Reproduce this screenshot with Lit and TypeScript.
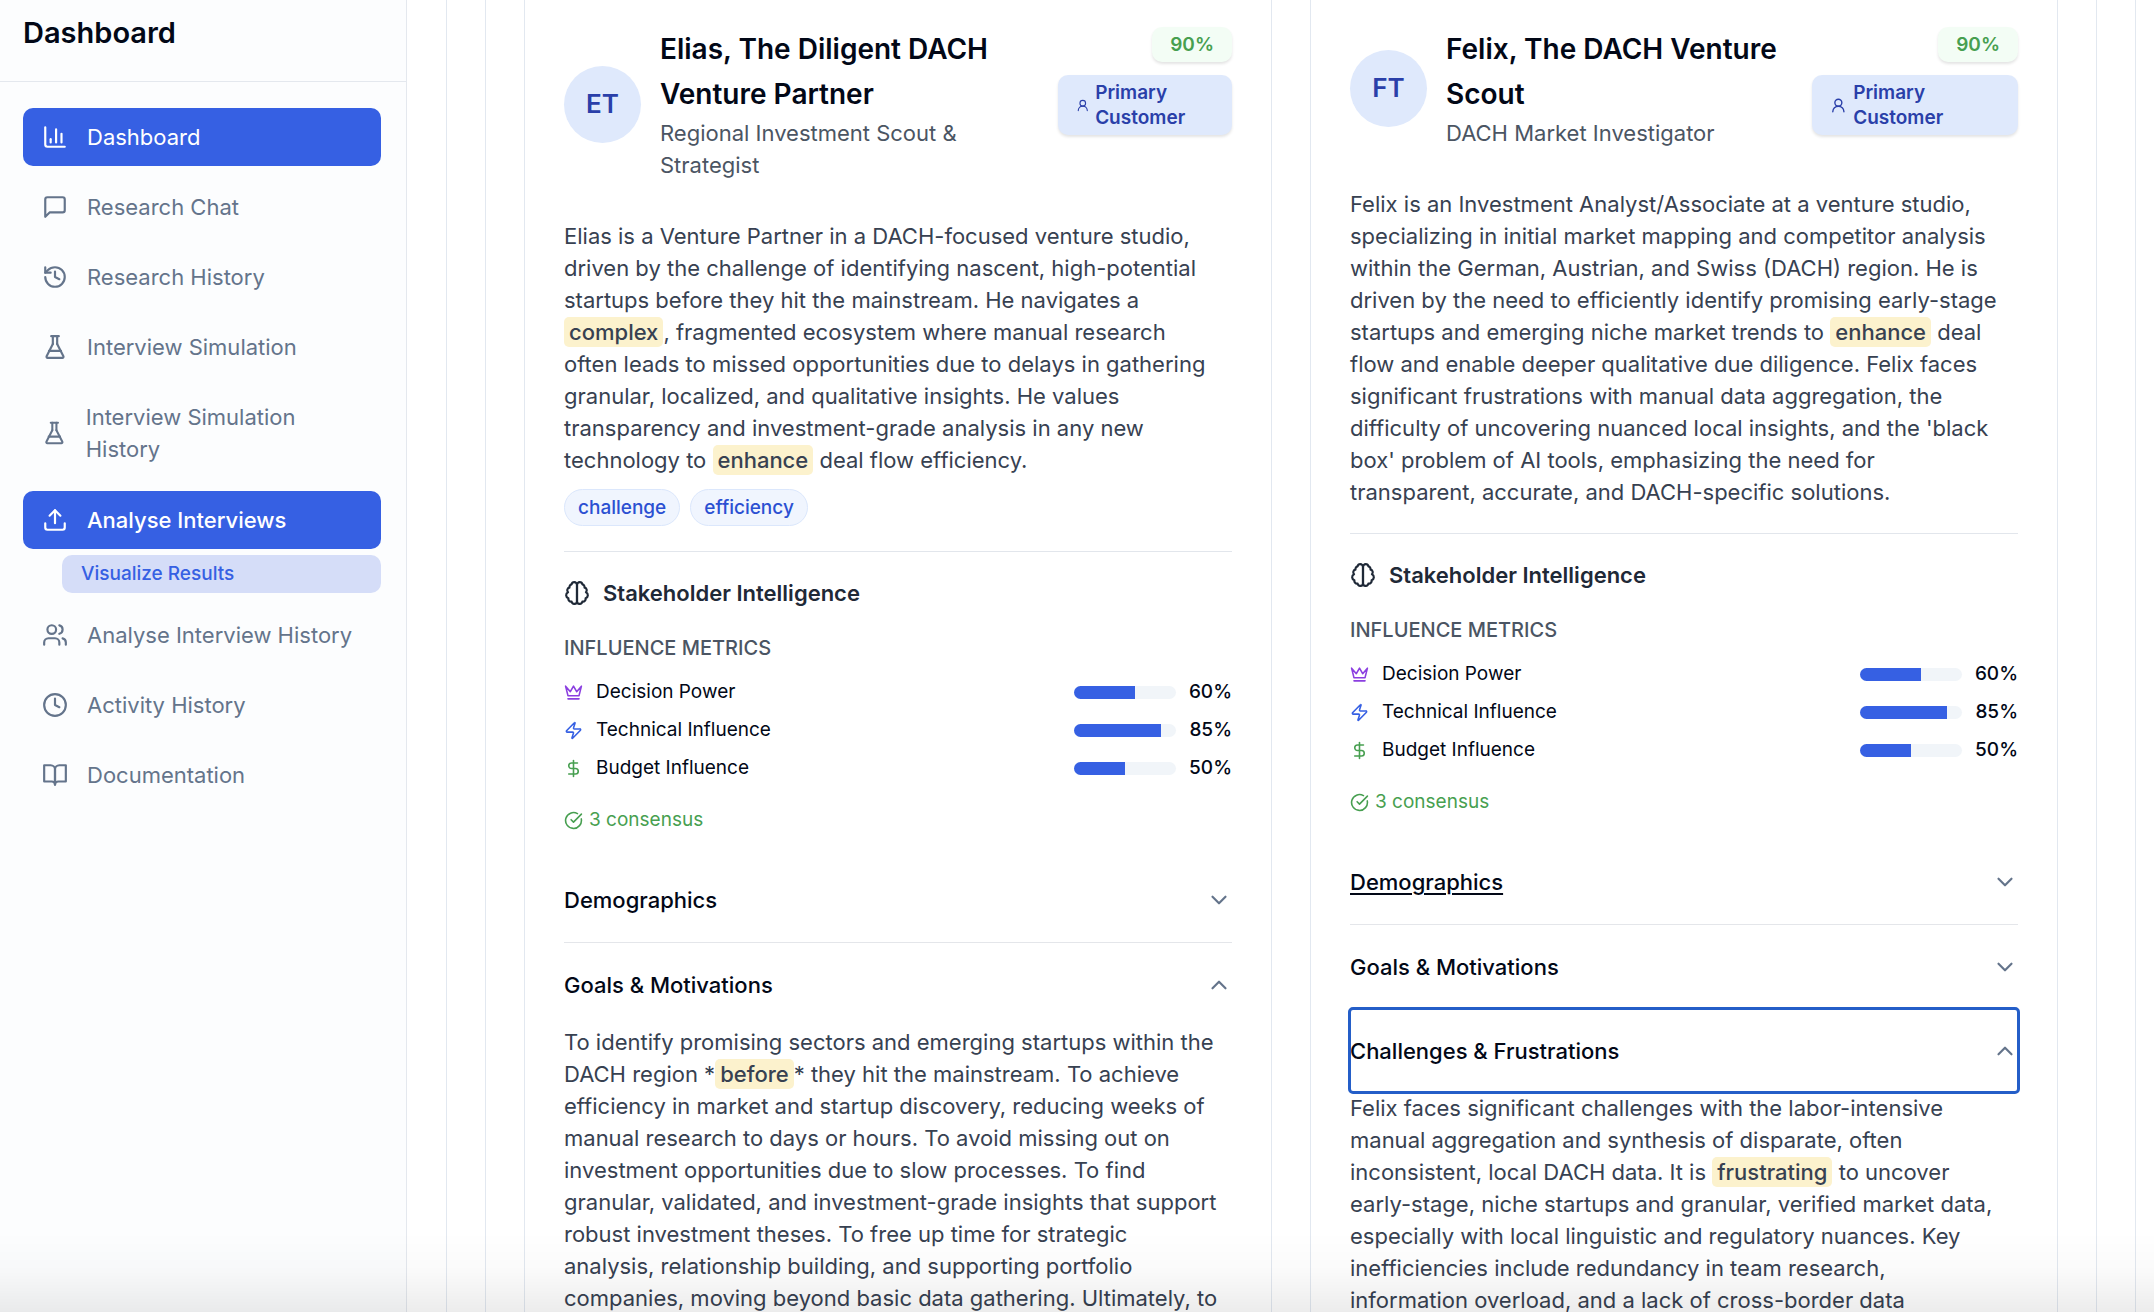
import { LitElement, html, css, svg, nothing } from "lit";
import type { TemplateResult } from "lit";
import { customElement, property, state } from "lit/decorators.js";
import { classMap } from "lit/directives/class-map.js";

const ICONS: Record<string, TemplateResult> = {
  chart: svg`<path d="M3 3v16a2 2 0 0 0 2 2h16"/><path d="M13 17V5"/><path d="M18 17V9"/><path d="M8 17v-3"/>`,
  message: svg`<path d="M21 15a2 2 0 0 1-2 2H7l-4 4V5a2 2 0 0 1 2-2h14a2 2 0 0 1 2 2z"/>`,
  history: svg`<path d="M3 12a9 9 0 1 0 9-9 9.75 9.75 0 0 0-6.74 2.74L3 8"/><path d="M3 3v5h5"/><path d="M12 7v5l4 2"/>`,
  flask: svg`<path d="M10 2v7.31"/><path d="M14 9.3V2"/><path d="M8.5 2h7"/><path d="M14 9.3 19.74 20.55a1 1 0 0 1-.9 1.45H5.17a1 1 0 0 1-.9-1.45L10 9.3"/><path d="M6.5 15.5h11"/>`,
  upload: svg`<path d="M21 15v4a2 2 0 0 1-2 2H5a2 2 0 0 1-2-2v-4"/><path d="m17 8-5-5-5 5"/><path d="M12 3v12"/>`,
  users: svg`<path d="M16 21v-2a4 4 0 0 0-4-4H6a4 4 0 0 0-4 4v2"/><circle cx="9" cy="7" r="4"/><path d="M22 21v-2a4 4 0 0 0-3-3.87"/><path d="M16 3.13a4 4 0 0 1 0 7.75"/>`,
  clock: svg`<circle cx="12" cy="12" r="10"/><path d="M12 6v6l4 2"/>`,
  book: svg`<path d="M2 3h6a4 4 0 0 1 4 4v14a3 3 0 0 0-3-3H2z"/><path d="M22 3h-6a4 4 0 0 0-4 4v14a3 3 0 0 1 3-3h7z"/>`,
  person: svg`<circle cx="12" cy="8" r="5"/><path d="M20 21a8 8 0 0 0-16 0"/>`,
  brain: svg`<path d="M9.5 2A2.5 2.5 0 0 1 12 4.5v15a2.5 2.5 0 0 1-4.96.44 2.5 2.5 0 0 1-2.96-3.08 3 3 0 0 1-.34-5.58 2.5 2.5 0 0 1 1.32-4.24 2.5 2.5 0 0 1 1.98-3A2.5 2.5 0 0 1 9.5 2Z"/><path d="M14.5 2A2.5 2.5 0 0 0 12 4.5v15a2.5 2.5 0 0 0 4.96.44 2.5 2.5 0 0 0 2.96-3.08 3 3 0 0 0 .34-5.58 2.5 2.5 0 0 0-1.32-4.24 2.5 2.5 0 0 0-1.98-3A2.5 2.5 0 0 0 14.5 2Z"/>`,
  crown: svg`<path d="m2 4 3 12h14l3-12-6 7-4-7-4 7-6-7z"/><path d="M5 20h14"/>`,
  zap: svg`<path d="M4 14a1 1 0 0 1-.78-1.63l9.9-10.2a.5.5 0 0 1 .86.46l-1.92 6.02A1 1 0 0 0 13 10h7a1 1 0 0 1 .78 1.63l-9.9 10.2a.5.5 0 0 1-.86-.46l1.92-6.02A1 1 0 0 0 11 14z"/>`,
  dollar: svg`<path d="M12 2v20"/><path d="M17 5H9.5a3.5 3.5 0 0 0 0 7h5a3.5 3.5 0 0 1 0 7H6"/>`,
  check: svg`<path d="M21.8 10A10 10 0 1 1 17 3.34"/><path d="m9 11 3 3L22 4"/>`,
  down: svg`<path d="m6 9 6 6 6-6"/>`,
  up: svg`<path d="m6 15 6-6 6 6"/>`,
};

const icon = (name: string, cls: string) =>
  html`<svg class=${cls} viewBox="0 0 24 24" aria-hidden="true">${ICONS[name]}</svg>`;

/** Text in which [[word]] marks a highlighted term. */
const rich = (text: string) =>
  text.split(/\[\[|\]\]/).map((part, i) => (i % 2 ? html`<mark class="mark">${part}</mark>` : part));

interface Section { title: string; body: string; open: boolean; hovered?: boolean; focused?: boolean }
interface Persona {
  initials: string; name: string; role: string; score: string; summary: string;
  tags: string[]; sections: Section[];
}

const METRICS = [
  { icon: "crown", tone: "purple", label: "Decision Power", value: 60 },
  { icon: "zap", tone: "blue", label: "Technical Influence", value: 85 },
  { icon: "dollar", tone: "green", label: "Budget Influence", value: 50 },
];

const PERSONAS: Persona[] = [
  {
    initials: "ET", name: "Elias, The Diligent DACH Venture Partner",
    role: "Regional Investment Scout & Strategist", score: "90%",
    summary: "Elias is a Venture Partner in a DACH-focused venture studio, driven by the challenge of identifying nascent, high-potential startups before they hit the mainstream. He navigates a [[complex]], fragmented ecosystem where manual research often leads to missed opportunities due to delays in gathering granular, localized, and qualitative insights. He values transparency and investment-grade analysis in any new technology to [[enhance]] deal flow efficiency.",
    tags: ["challenge", "efficiency"],
    sections: [
      { title: "Demographics", body: "", open: false },
      { title: "Goals & Motivations", open: true, body: "To identify promising sectors and emerging startups within the DACH region *[[before]]* they hit the mainstream. To achieve efficiency in market and startup discovery, reducing weeks of manual research to days or hours. To avoid missing out on investment opportunities due to slow processes. To find granular, validated, and investment-grade insights that support robust investment theses. To free up time for strategic analysis, relationship building, and supporting portfolio companies, moving beyond basic data gathering. Ultimately, to" },
    ],
  },
  {
    initials: "FT", name: "Felix, The DACH Venture Scout",
    role: "DACH Market Investigator", score: "90%",
    summary: "Felix is an Investment Analyst/Associate at a venture studio, specializing in initial market mapping and competitor analysis within the German, Austrian, and Swiss (DACH) region. He is driven by the need to efficiently identify promising early-stage startups and emerging niche market trends to [[enhance]] deal flow and enable deeper qualitative due diligence. Felix faces significant frustrations with manual data aggregation, the difficulty of uncovering nuanced local insights, and the 'black box' problem of AI tools, emphasizing the need for transparent, accurate, and DACH-specific solutions.",
    tags: [],
    sections: [
      { title: "Demographics", body: "", open: false, hovered: true },
      { title: "Goals & Motivations", body: "", open: false },
      { title: "Challenges & Frustrations", open: true, focused: true, body: "Felix faces significant challenges with the labor-intensive manual aggregation and synthesis of disparate, often inconsistent, local DACH data. It is [[frustrating]] to uncover early-stage, niche startups and granular, verified market data, especially with local linguistic and regulatory nuances. Key inefficiencies include redundancy in team research, information overload, and a lack of cross-border data" },
    ],
  },
];

const base = css`
  * { box-sizing: border-box; margin: 0; }
  svg { fill: none; stroke: currentColor; stroke-width: 2; stroke-linecap: round; stroke-linejoin: round; }
  .icon { width: 26px; height: 26px; }
  .icon-small { width: 19px; height: 19px; }
`;

@customElement("side-nav")
class SideNav extends LitElement {
  static styles = [base, css`
    :host { display: flex; flex-direction: column; background: #fcfdfe; border-right: 1px solid #e4e8ee; }
    .header { padding: 10px 23px 26px; border-bottom: 1px solid #e4e8ee; }
    .title { font-size: 29px; line-height: 45px; font-weight: 600; }
    .menu { display: flex; flex-direction: column; gap: 12px; padding: 26px 25px 26px 23px; }
    .item { display: flex; align-items: center; gap: 19px; padding: 13px 19px; border-radius: 10px;
      color: #64748b; text-decoration: none; }
    .item.active { background: #3660e3; color: #fff; }
    .item.strong { font-weight: 500; }
    .group { display: flex; flex-direction: column; padding: 1px 0; gap: 6px; }
    .sub { margin-left: 39px; padding: 6px 19px; border-radius: 10px; background: #d5ddf8; color: #3660e3;
      font-size: 19px; line-height: 26px; font-weight: 500; text-decoration: none; }
  `];

  private item(name: string, label: string, cls = "") {
    return html`<a class="item ${cls}" href="#">${icon(name, "icon")}<span>${label}</span></a>`;
  }

  render() {
    return html`
      <div class="header"><h2 class="title">Dashboard</h2></div>
      <nav class="menu">
        ${this.item("chart", "Dashboard", "active")}
        ${this.item("message", "Research Chat")}
        ${this.item("history", "Research History")}
        ${this.item("flask", "Interview Simulation")}
        ${this.item("flask", "Interview Simulation History")}
        <div class="group">
          ${this.item("upload", "Analyse Interviews", "active strong")}
          <a class="sub" href="#">Visualize Results</a>
        </div>
        ${this.item("users", "Analyse Interview History")}
        ${this.item("clock", "Activity History")}
        ${this.item("book", "Documentation")}
      </nav>`;
  }
}

@customElement("persona-card")
class PersonaCard extends LitElement {
  @property({ attribute: false }) persona!: Persona;
  @state() private toggled: Record<number, boolean> = {};

  static styles = [base, css`
    :host { display: block; padding: 27px 39px; border: 1px solid #e2e8f0; border-top: 0; min-width: 0; }
    .head { display: flex; justify-content: space-between; align-items: flex-start; }
    .who { display: flex; align-items: center; gap: 19px; }
    .avatar { flex: none; display: grid; place-items: center; width: 77px; height: 77px; border-radius: 50%;
      background: #dfe9fc; color: #2a3fa9; font-size: 26px; font-weight: 600; }
    .name { font-size: 28px; line-height: 45px; font-weight: 600; }
    .role { color: #4b5563; }
    .badges { display: flex; flex-direction: column; align-items: flex-end; gap: 13px; }
    .badge { display: flex; align-items: center; gap: 6px; padding: 5px 18px; border-radius: 10px;
      font-size: 19px; line-height: 25px; font-weight: 600; box-shadow: 0 2px 3px #0000001c; }
    .score { background: #f3fdf5; color: #479f50; }
    .kind { background: #dfe9fc; color: #2a3fa9; }
    .summary, .body { padding-right: 12px; color: #374151; }
    .summary { margin-top: 39px; }
    .mark { padding: 2px 5px; border-radius: 5px; background: #fcf2cd; color: inherit; font-weight: 500; }
    .tags { display: flex; gap: 10px; margin-top: 13px; }
    .tag { padding: 5px 13px; border: 1px solid #dbe7fc; border-radius: 19px; background: #f0f5fe; color: #2b50d2;
      font-size: 19px; line-height: 25px; font-weight: 500; }
    .stake { margin-top: 25px; padding-top: 25px; border-top: 1px solid #e2e6ec; }
    .stake-title { display: flex; align-items: center; gap: 13px; font-size: 22px; line-height: 32px; font-weight: 600; color: #1f2937; }
    .caption { margin: 26px 0 18px; font-size: 20px; line-height: 26px; font-weight: 500; color: #4b5563; }
    .metrics { display: flex; flex-direction: column; gap: 12px; font-size: 19px; line-height: 26px; }
    .metric { display: flex; align-items: center; gap: 13px; }
    .label { flex: 1; }
    .purple { color: #8b3fe0; } .blue { color: #3660e3; } .green { color: #479f50; }
    .track { width: 102px; height: 13px; border-radius: 7px; overflow: hidden; background: #f1f5f9; }
    .fill { height: 100%; background: #3660e3; }
    .value { font-weight: 500; }
    .consensus { display: flex; align-items: center; gap: 6px; margin: 26px 0 25px; font-size: 19px; line-height: 26px; color: #479f50; }
    .row { border-top: 1px solid #e4e6ea; }
    .row.first { border-top: 0; }
    .toggle { display: flex; align-items: center; justify-content: space-between; width: 100%; padding: 26px 0 25px; border: 0;
      background: none; color: inherit; font: inherit; font-weight: 500; text-align: left; border-radius: 3px; cursor: pointer; }
    .row.first .toggle { padding-bottom: 26px; }
    .toggle.hovered, .toggle:hover { text-decoration: underline; text-underline-offset: 3px; }
    .toggle.focused { outline: 3px solid #245ec8; outline-offset: -1px; }
    .chevron { width: 26px; height: 26px; color: #64748b; }
  `];

  render() {
    const p = this.persona;
    return html`
      <header class="head">
        <div class="who">
          <div class="avatar">${p.initials}</div>
          <div><h3 class="name">${p.name}</h3><p class="role">${p.role}</p></div>
        </div>
        <div class="badges">
          <span class="badge score">${p.score}</span>
          <span class="badge kind">${icon("person", "icon-small")}<span>Primary Customer</span></span>
        </div>
      </header>
      <p class="summary">${rich(p.summary)}</p>
      ${p.tags.length ? html`<div class="tags">${p.tags.map((t) => html`<span class="tag">${t}</span>`)}</div>` : nothing}
      <section class="stake">
        <h4 class="stake-title">${icon("brain", "icon")}Stakeholder Intelligence</h4>
        <h5 class="caption">INFLUENCE METRICS</h5>
        <div class="metrics">
          ${METRICS.map((m) => html`<div class="metric">
            ${icon(m.icon, `icon-small ${m.tone}`)}<span class="label">${m.label}</span>
            <div class="track"><div class="fill" style="width:${m.value}%"></div></div>
            <span class="value">${m.value}%</span>
          </div>`)}
        </div>
        <p class="consensus">${icon("check", "icon-small")}3 consensus</p>
      </section>
      ${p.sections.map((s, i) => {
        const open = this.toggled[i] ?? s.open;
        return html`<div class=${classMap({ row: true, first: i === 0 })}>
          <button class=${classMap({ toggle: true, hovered: !!s.hovered, focused: !!s.focused })}
            aria-expanded=${open} @click=${() => (this.toggled = { ...this.toggled, [i]: !open })}>
            <span>${s.title}</span>${icon(open ? "up" : "down", "chevron")}
          </button>
          ${open ? html`<p class="body">${rich(s.body)}</p>` : nothing}
        </div>`;
      })}`;
  }
}

@customElement("app-root")
class AppRoot extends LitElement {
  static styles = [base, css`
    :host { display: grid; grid-template-columns: 407px minmax(0, 1fr); height: 100vh; overflow: hidden; background: #fff;
      color: #020817; font: 400 22px/32px Inter, "Liberation Sans", sans-serif; }
    .main { padding: 0 18px 0 39px; min-width: 0; }
    .panel { padding: 0 38px; border: 1px solid #e2e8f0; border-width: 0 1px; }
    .cards { display: grid; grid-template-columns: repeat(2, minmax(0, 1fr)); gap: 38px; align-items: start; }
    .fade { position: fixed; inset: auto 0 0; height: 80px; pointer-events: none;
      background: linear-gradient(#0000, #00000005 50%, #00000013); }
  `];

  render() {
    return html`
      <side-nav></side-nav>
      <main class="main">
        <div class="panel"><div class="panel"><div class="cards">
          ${PERSONAS.map((p) => html`<persona-card .persona=${p}></persona-card>`)}
        </div></div></div>
      </main>
      <div class="fade"></div>`;
  }
}
